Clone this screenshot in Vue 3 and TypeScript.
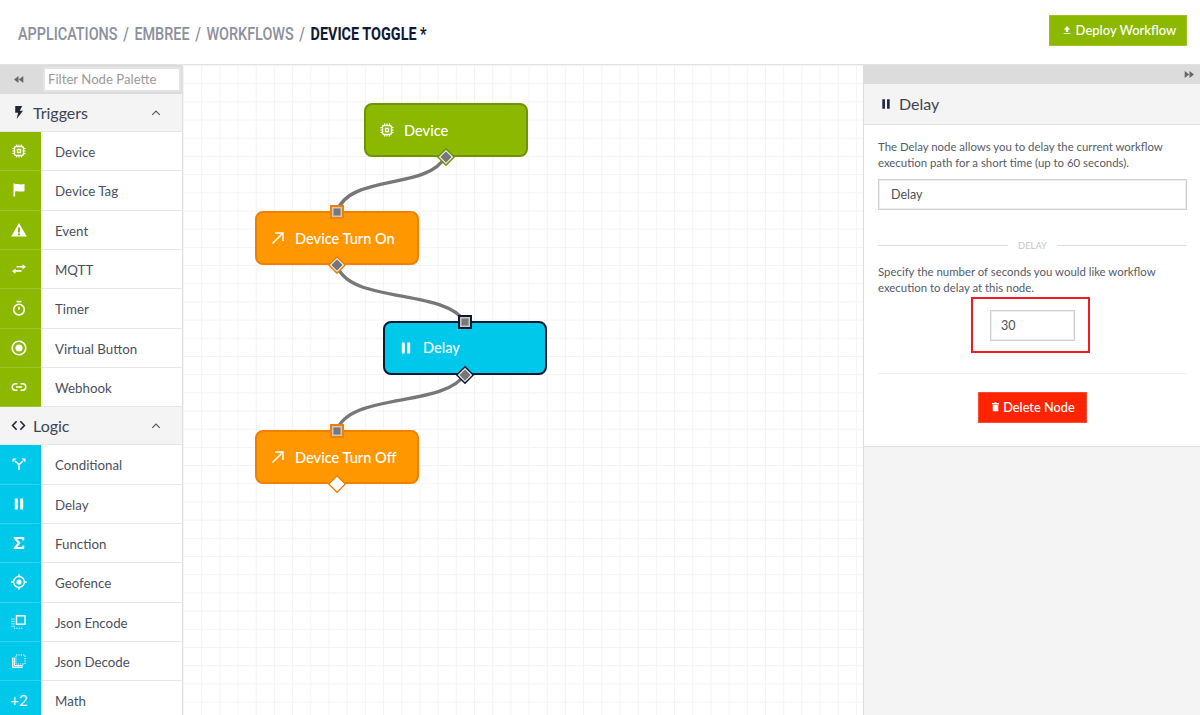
<script setup lang="ts">
interface Shape { d: string; fill?: boolean; width?: number; rule?: 'evenodd'; dash?: string }
const f = (d: string, rule?: 'evenodd'): Shape => ({ d, fill: true, rule })
const s = (d: string, width = 1.5, dash?: string): Shape => ({ d, width, dash })

const icons: Record<string, Shape[]> = {
  chip: [
    s('M5 3.5h6a1.5 1.5 0 0 1 1.5 1.5v6a1.5 1.5 0 0 1-1.5 1.5H5A1.5 1.5 0 0 1 3.5 11V5A1.5 1.5 0 0 1 5 3.5z'),
    s('M6.5 6.5h3v3h-3z', 1.3),
    s('M5.5 1.4v2M8 1.4v2M10.5 1.4v2M5.5 12.6v2M8 12.6v2M10.5 12.6v2M1.4 5.5h2M1.4 8h2M1.4 10.5h2M12.6 5.5h2M12.6 8h2M12.6 10.5h2', 1.1),
  ],
  flag: [f('M2.5 1.5h1.6v.8c2.6-1 4.2.8 9.4-.2v7.2c-5.2 1-6.8-.8-9.4.2V14.5H2.5z')],
  warn: [f('M8 1l7.8 13.6H.2zM7 5.6v4.8h2V5.6zm0 5.8v1.9h2v-1.9z', 'evenodd')],
  mqtt: [f('M5.5 5h6V3.2L15 5.8l-3.5 2.6V6.6h-6z'), f('M10.5 9H4.5V7.6L1 10.2l3.5 2.6V10.8h6z')],
  timer: [s('M8 4.3a5.3 5.3 0 1 1 0 10.6A5.3 5.3 0 0 1 8 4.3z', 1.6), s('M8 6.8v3', 1.6), s('M5.5 1.6h5', 1.6)],
  virtual: [s('M8 1.2a6.8 6.8 0 1 1 0 13.6A6.8 6.8 0 0 1 8 1.2z', 1.6), f('M8 4.4a3.6 3.6 0 1 1 0 7.2 3.6 3.6 0 0 1 0-7.2z')],
  link: [s('M6.5 4.8H4.4a3.2 3.2 0 0 0 0 6.4h2.1M9.5 4.8h2.1a3.2 3.2 0 0 1 0 6.4H9.5M5 8h6', 1.5)],
  cond: [s('M8 14V8.6L4 5M8 8.6L12 5', 1.5), f('M1.5 2.5h4l-4 4z'), f('M14.5 2.5h-4l4 4z')],
  pause: [f('M3.8 2.5h3v11h-3zM9.2 2.5h3v11h-3z')],
  sigma: [f('M2.8 2h10.4v3.4h-1.7L11 3.9H6.2L9.6 8l-3.4 4.1H11l.5-1.5h1.7V14H2.8v-1.5L6.7 8 2.8 3.5z')],
  geo: [
    s('M8 2.6a5.4 5.4 0 1 1 0 10.8A5.4 5.4 0 0 1 8 2.6z', 1.5),
    f('M8 5.4a2.6 2.6 0 1 1 0 5.2 2.6 2.6 0 0 1 0-5.2z'),
    s('M8 .2v2.4M8 13.4v2.4M.2 8h2.4M13.4 8h2.4', 1.5),
  ],
  encode: [
    s('M5.5 1.8h8.5v8.5H5.5z', 1.4),
    s('M3 4.5v9.7h9.5', 1, '1.2 1.2'),
    s('M1 4.5v9.7', 1, '1.2 1.2'),
  ],
  decode: [
    s('M5 2h9v9H5z', 1, '1.2 1.2'),
    s('M1.7 4.5v9.8h10', 1.4),
    s('M3.6 4.5v8h8.4', 1),
  ],
  arrow: [s('M2.5 13.5L13 3M5 3h8v8', 1.5)],
  upload: [f('M8 1.5L13 7H10v4H6V7H3zM2.5 12.6h11V14h-11z')],
  trash: [f('M3 3h3.2l.6-1.2h2.4L9.8 3H13v1.6H3zM4 5.5h8V14a.9.9 0 0 1-.9.9H4.9A.9.9 0 0 1 4 14z')],
  bolt: [f('M4.5 1h7.5L9.3 6h3.5L6 15l1.6-6.8H4.5z')],
  code: [s('M6 3.5L1.7 8 6 12.5M10 3.5L14.3 8 10 12.5', 1.7)],
  chevron: [s('M3 10.5L8 5.5l5 5', 1.5)],
  left: [f('M8 3v10L1.5 8zM15 3v10L8.5 8z')],
  right: [f('M8 3v10l6.5-5zM1 3v10l6.5-5z')],
}

interface Item { label: string; icon?: string; text?: string }
interface Section { title: string; icon: string; tone: string; items: Item[] }

const sections: Section[] = [
  {
    title: 'Triggers', icon: 'bolt', tone: 'green',
    items: [
      { label: 'Device', icon: 'chip' },
      { label: 'Device Tag', icon: 'flag' },
      { label: 'Event', icon: 'warn' },
      { label: 'MQTT', icon: 'mqtt' },
      { label: 'Timer', icon: 'timer' },
      { label: 'Virtual Button', icon: 'virtual' },
      { label: 'Webhook', icon: 'link' },
    ],
  },
  {
    title: 'Logic', icon: 'code', tone: 'blue',
    items: [
      { label: 'Conditional', icon: 'cond' },
      { label: 'Delay', icon: 'pause' },
      { label: 'Function', icon: 'sigma' },
      { label: 'Geofence', icon: 'geo' },
      { label: 'Json Encode', icon: 'encode' },
      { label: 'Json Decode', icon: 'decode' },
      { label: 'Math', text: '+2' },
    ],
  },
]

interface WfNode { label: string; icon: string; tone: string; x: number; y: number; input: boolean; filled: boolean }
const nodes: WfNode[] = [
  { label: 'Device', icon: 'chip', tone: 'green', x: 181, y: 38, input: false, filled: true },
  { label: 'Device Turn On', icon: 'arrow', tone: 'orange', x: 72, y: 146, input: true, filled: true },
  { label: 'Delay', icon: 'pause', tone: 'blue', x: 200, y: 255.5, input: true, filled: true },
  { label: 'Device Turn Off', icon: 'arrow', tone: 'orange', x: 72, y: 365, input: true, filled: false },
]
const edges = [
  'M262 92C245 125 165 109 154 147',
  'M154 200C165 239 262 223 282 257',
  'M282 309C262 343 165 327 154 366',
]
</script>

<template>
  <div class="app">
    <header class="top">
      <h1 class="crumbs">
        <span>APPLICATIONS</span><i>/</i><span>EMBREE</span><i>/</i><span>WORKFLOWS</span><i>/</i><b>DEVICE TOGGLE *</b>
      </h1>
      <button class="deploy">
        <svg class="ico up" viewBox="0 0 16 16"><path v-for="p in icons.upload" :key="p.d" :d="p.d" fill="currentColor" /></svg>
        Deploy Workflow
      </button>
    </header>

    <div class="main">
      <aside class="palette">
        <div class="filter">
          <div class="collapse">
            <svg class="ico tiny" viewBox="0 0 16 16"><path v-for="p in icons.left" :key="p.d" :d="p.d" fill="currentColor" /></svg>
          </div>
          <div class="filter-input">Filter Node Palette</div>
        </div>
        <section v-for="sec in sections" :key="sec.title">
          <div class="sec-head">
            <svg class="ico sec-ico" viewBox="0 0 16 16">
              <path v-for="p in icons[sec.icon]" :key="p.d" :d="p.d" :fill="p.fill ? 'currentColor' : 'none'" :stroke="p.fill ? 'none' : 'currentColor'" :stroke-width="p.width" />
            </svg>
            <span class="sec-title">{{ sec.title }}</span>
            <svg class="ico chev" viewBox="0 0 16 16"><path v-for="p in icons.chevron" :key="p.d" :d="p.d" fill="none" stroke="currentColor" :stroke-width="p.width" /></svg>
          </div>
          <div v-for="item in sec.items" :key="item.label" class="row">
            <div class="row-ico" :class="sec.tone">
              <span v-if="item.text" class="row-txt">{{ item.text }}</span>
              <svg v-else class="ico" viewBox="0 0 16 16">
                <path v-for="p in icons[item.icon!]" :key="p.d" :d="p.d" :fill="p.fill ? 'currentColor' : 'none'" :fill-rule="p.rule" :stroke="p.fill ? 'none' : 'currentColor'" :stroke-width="p.width" :stroke-dasharray="p.dash" />
              </svg>
            </div>
            <div class="row-label">{{ item.label }}</div>
          </div>
        </section>
      </aside>

      <div class="canvas">
        <svg class="edges" width="680" height="650">
          <path v-for="d in edges" :key="d" :d="d" fill="none" stroke="#777" stroke-width="3.4" stroke-linecap="round" />
        </svg>
        <div
          v-for="n in nodes"
          :key="n.label"
          class="node"
          :class="n.tone"
          :style="{ left: n.x + 'px', top: n.y + 'px' }"
        >
          <svg class="ico" viewBox="0 0 16 16">
            <path v-for="p in icons[n.icon]" :key="p.d" :d="p.d" :fill="p.fill ? 'currentColor' : 'none'" :stroke="p.fill ? 'none' : 'currentColor'" :stroke-width="p.width" />
          </svg>
          <span>{{ n.label }}</span>
          <div v-if="n.input" class="port-in"></div>
          <div class="port-out" :class="{ empty: !n.filled }"></div>
        </div>
      </div>

      <aside class="panel">
        <div class="panel-bar">
          <svg class="ico tiny" viewBox="0 0 16 16"><path v-for="p in icons.right" :key="p.d" :d="p.d" fill="currentColor" /></svg>
        </div>
        <div class="panel-head">
          <svg class="ico pause" viewBox="0 0 16 16"><path v-for="p in icons.pause" :key="p.d" :d="p.d" fill="currentColor" /></svg>
          <span>Delay</span>
        </div>
        <div class="panel-body">
          <p class="desc">The Delay node allows you to delay the current workflow execution path for a short time (up to 60 seconds).</p>
          <div class="field">Delay</div>
          <div class="divider"><span>DELAY</span></div>
          <p class="desc second">Specify the number of seconds you would like workflow execution to delay at this node.</p>
          <div class="highlight">
            <div class="field small">30</div>
          </div>
          <hr class="rule" />
          <button class="delete">
            <svg class="ico trash" viewBox="0 0 16 16"><path v-for="p in icons.trash" :key="p.d" :d="p.d" fill="currentColor" /></svg>
            Delete Node
          </button>
        </div>
      </aside>
    </div>
  </div>
</template>

<style scoped>
.app {
  width: 1200px;
  height: 715px;
  overflow: hidden;
  display: flex;
  flex-direction: column;
  background: #fff;
  font-family: "Lato", "Noto Sans", sans-serif;
  color: #4a5060;
}
.ico { width: 16px; height: 16px; display: block; flex: none; }
.top {
  height: 65px;
  flex: none;
  box-sizing: border-box;
  border-bottom: 1px solid #e2e2e2;
  display: flex;
  align-items: center;
  justify-content: space-between;
  padding: 0 13px 3px 18px;
}
.crumbs {
  margin: 5px 0 0;
  font: 500 18px "Roboto", sans-serif;
  color: #8b909d;
  display: flex;
  white-space: nowrap;
  transform: scaleX(.8);
  transform-origin: left center;
}
.crumbs i { font-style: normal; margin: 0 7px; }
.crumbs b { color: #0e1a33; font-weight: 700; }
.deploy {
  width: 138px;
  height: 31px;
  border: 1px solid #9cc22c;
  background: #8cb800;
  color: #fff;
  font: 500 13px "Lato", sans-serif;
  display: flex;
  align-items: center;
  justify-content: center;
  gap: 4px;
  padding: 0 0 2px 2px;
}
.ico.up { width: 10px; height: 10px; }
.main { flex: 1; display: flex; min-height: 0; }

.palette {
  width: 183px;
  flex: none;
  box-sizing: border-box;
  border-right: 1px solid #e2e2e2;
  overflow: hidden;
}
.filter { height: 29px; background: #dcdcdc; display: flex; }
.collapse { width: 43px; box-sizing: border-box; padding-right: 6px; display: flex; align-items: center; justify-content: center; color: #666; }
.ico.tiny { width: 11px; height: 11px; }
.filter-input {
  width: 138px;
  height: 25px;
  margin-top: 2px;
  box-sizing: border-box;
  background: #fff;
  border: 2px solid #e4e4e4;
  padding-left: 3px;
  font-size: 13.2px;
  line-height: 20px;
  color: #9a9a9a;
}
.sec-head {
  height: 38px;
  box-sizing: border-box;
  background: #f4f4f4;
  border-bottom: 1px solid #e6e6e6;
  display: flex;
  align-items: center;
  padding-left: 11px;
  color: #3e4454;
}
.sec-ico { width: 15px; height: 15px; color: #20263a; }
.sec-title { margin-left: 7px; font-size: 16px; flex: 1; }
.ico.chev { width: 12px; height: 12px; margin-right: 20px; color: #555; }
.row { height: 39.33px; display: flex; box-sizing: border-box; }
.row-ico {
  width: 41px;
  flex: none;
  display: flex;
  align-items: center;
  justify-content: center;
  padding-right: 3px;
  color: #fff;
  box-sizing: border-box;
  border-bottom: 1px solid rgba(255, 255, 255, .18);
}
.row-ico.green { background: #8cb800; }
.row-ico.blue { background: #00c8eb; }
.row-txt { font-size: 15px; }
.row-label {
  flex: 1;
  box-sizing: border-box;
  border-bottom: 1px solid #e6e6e6;
  padding-left: 14px;
  font-size: 13.3px;
  line-height: 40px;
}

.canvas {
  flex: 1;
  position: relative;
  overflow: hidden;
  background-color: #fff;
  background-image:
    linear-gradient(#f3f3f3 1px, transparent 1px),
    linear-gradient(90deg, #f3f3f3 1px, transparent 1px);
  background-size: 18.2px 18.2px;
}
.edges { position: absolute; left: 0; top: 0; z-index: 2; pointer-events: none; }
.node {
  position: absolute;
  width: 164px;
  height: 54px;
  box-sizing: border-box;
  border-radius: 8px;
  border: 2px solid;
  display: flex;
  align-items: center;
  padding-left: 13px;
  gap: 9px;
  color: #fff;
  font-size: 14.6px;
  font-weight: 500;
}
.node.green { background: #8cb800; border-color: #6f9400; }
.node.orange { background: #ff9800; border-color: #f08000; }
.node.blue { background: #00c8eb; border-color: #0e1a33; }
.port-in {
  position: absolute;
  left: 73px;
  top: -8px;
  width: 14px;
  height: 14px;
  box-sizing: border-box;
  border: 2px solid;
  border-color: inherit;
  background: #777;
  box-shadow: inset 0 0 0 1.5px rgba(255, 255, 255, .6);
  z-index: 3;
}
.port-out {
  position: absolute;
  left: 76px;
  bottom: -5.5px;
  width: 8px;
  height: 8px;
  box-sizing: content-box;
  border: 1.5px solid #fff;
  margin: -1.5px;
  background: #777;
  transform: rotate(45deg);
  box-shadow: 0 0 0 1.5px var(--port, #f08000);
  z-index: 3;
}
.node.green .port-out { --port: #6f9400; }
.node.blue .port-out { --port: #0e1a33; }
.port-out.empty { background: #fff; }

.panel {
  width: 337px;
  flex: none;
  box-sizing: border-box;
  border-left: 1px solid #dcdcdc;
  background: #f4f4f4;
}
.panel-bar {
  height: 19px;
  background: #dcdcdc;
  display: flex;
  align-items: center;
  justify-content: flex-end;
  padding-right: 5px;
  color: #666;
}
.panel-head {
  height: 41px;
  box-sizing: border-box;
  background: #f4f4f4;
  border-bottom: 1px solid #e2e2e2;
  display: flex;
  align-items: center;
  padding: 0 0 2px 15px;
  font-size: 16px;
  color: #3e4454;
}
.ico.pause { width: 14px; height: 14px; margin: 2px 6px 0 0; color: #20263a; }
.panel-body {
  box-sizing: border-box;
  height: 322px;
  background: #fff;
  border-bottom: 1px solid #e2e2e2;
  padding: 14px 13px 0 14px;
  display: flex;
  flex-direction: column;
}
.desc { margin: 0; font-size: 11.4px; line-height: 15.5px; color: #555b68; }
.field {
  height: 31px;
  box-sizing: border-box;
  border: 1px solid #cfcfcf;
  box-shadow: inset 0 0 0 1px #eee;
  margin-top: 9px;
  padding-left: 12px;
  line-height: 29px;
  font-size: 12.5px;
  color: #4a4f58;
}
.divider {
  margin-top: 29px;
  height: 13px;
  display: flex;
  align-items: center;
  justify-content: center;
  font-size: 9.4px;
  color: #c6c6c6;
  gap: 10px;
}
.divider::before, .divider::after { content: ""; flex: 1; height: 1px; background: #dedede; }
.second { margin-top: 12px; }
.highlight {
  align-self: center;
  width: 119px;
  height: 56px;
  box-sizing: border-box;
  margin: 2px 4px 0 0;
  padding: 1px 0 0 4px;
  border: 2px solid #ee1c25;
  display: flex;
  align-items: center;
  justify-content: center;
}
.field.small { width: 85px; margin: 0; padding-left: 10px; }
.rule { width: 100%; margin: 20px 0 0; border: 0; border-top: 1px solid #f0f0f0; }
.delete {
  align-self: center;
  margin-top: 18px;
  width: 109px;
  height: 31px;
  border: 1px solid #ff4a36;
  background: #ff2400;
  color: #fff;
  font: 500 12.8px "Lato", sans-serif;
  display: flex;
  align-items: center;
  justify-content: center;
  gap: 2px;
  padding: 0 0 1px;
}
.ico.trash { width: 11px; height: 11px; margin-top: -2px; }
</style>
